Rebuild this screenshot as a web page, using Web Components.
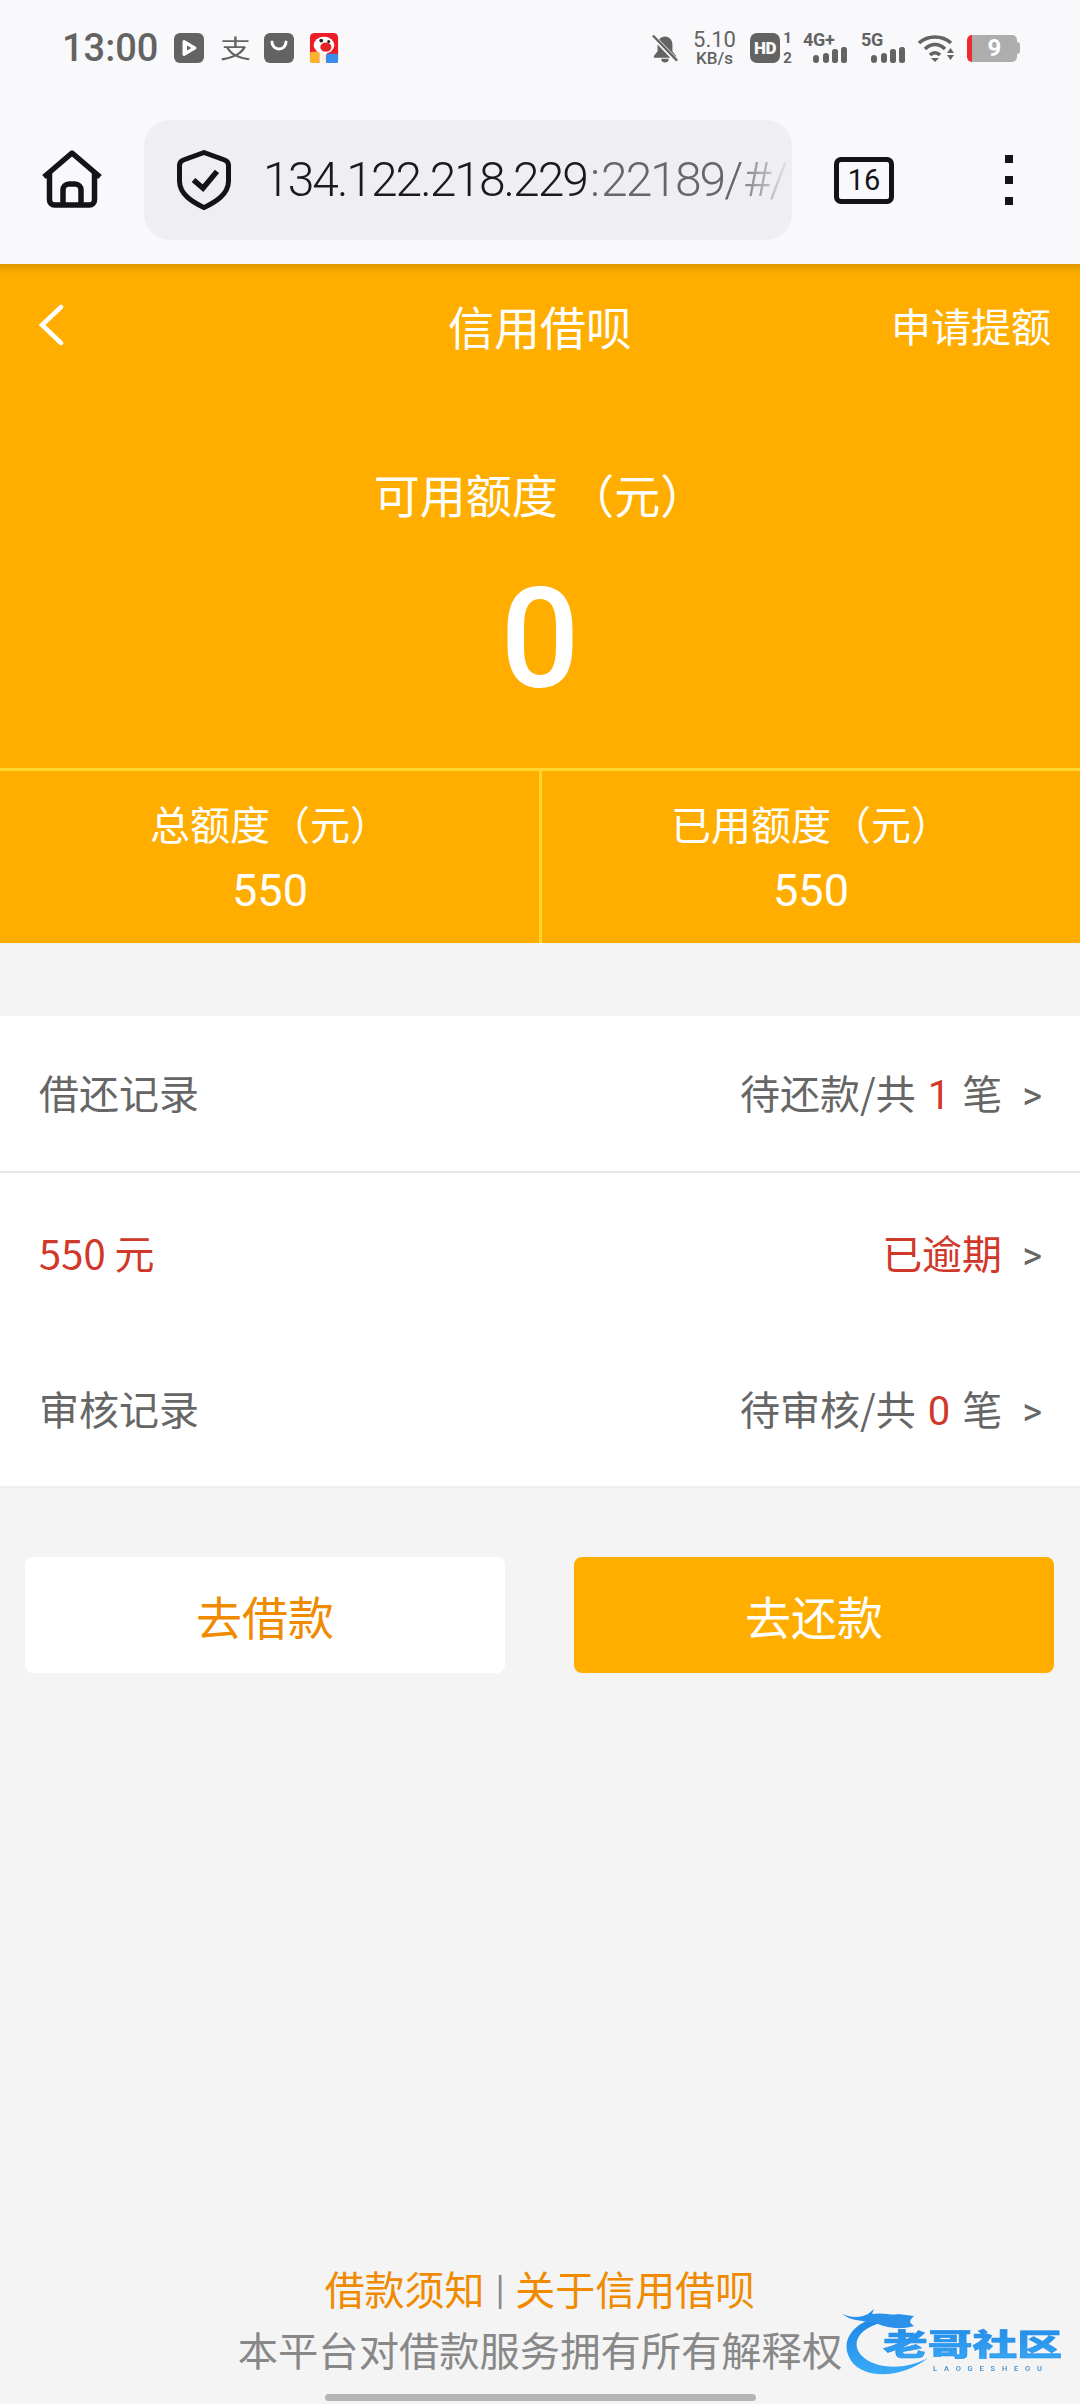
<!DOCTYPE html>
<html lang="zh">
<head>
<meta charset="utf-8">
<title>信用借呗</title>
<style>
  html, body { margin: 0; padding: 0; height: 100%; }
  body {
    display: flex;
    flex-direction: column;
    height: 2404px;
    background: #f4f4f4;
    font-family: "Noto Sans CJK SC", "Noto Sans", sans-serif;
    overflow: hidden;
  }
</style>
</head>
<body>
  <status-bar></status-bar>
  <browser-bar></browser-bar>
  <credit-header></credit-header>
  <record-list>
    <record-row label="借还记录" state="待还款/共" count="1" border></record-row>
    <record-row label="550 元" state="已逾期" alert></record-row>
    <record-row label="审核记录" state="待审核/共" count="0" last></record-row>
  </record-list>
  <action-buttons></action-buttons>
  <page-footer></page-footer>

<script>
const bars = /* html */`
  <svg width="44" height="16" viewBox="0 0 44 16">
    <rect x="10" y="8" width="6" height="8" rx="3" fill="#636363"/>
    <rect x="20" y="6" width="6" height="10" rx="3" fill="#636363"/>
    <rect x="29" y="2" width="6" height="14" rx="2.5" fill="#636363"/>
    <rect x="38" y="0" width="6" height="16" rx="2.5" fill="#636363"/>
  </svg>`

class StatusBar extends HTMLElement {
  constructor () {
    super()
    this.shadow = this.attachShadow({ mode: 'open' })
  }

  connectedCallback () {
    this.shadow.innerHTML = /* html */`
      <style>
        :host { display: flex; flex: none; height: 96px; padding: 0 60px 0 62px; align-items: center; background: #f9f9fb; color: #636363; box-sizing: border-box; font-family: Roboto, "Noto Sans", sans-serif; }
        .time { width: 112px; font-size: 38px; font-weight: 500; }
        .left { display: flex; align-items: center; }
        .right { display: flex; margin-left: auto; align-items: center; }
        svg { display: block; flex: none; }
        .zhi { width: 30px; margin-left: 16px; font: 400 31px/30px "Noto Sans CJK SC", sans-serif; text-align: center; transform: scaleY(.8); }
        .speed { width: 47px; margin-left: 13px; font-size: 17px; font-weight: 500; line-height: 18px; text-align: center; }
        .speed b { display: block; font-size: 22px; font-weight: 400; line-height: 19px; }
        .hd { display: flex; width: 30px; height: 30px; margin-left: 12px; align-items: center; justify-content: center; border-radius: 7px; background: #636363; color: #f9f9fb; font-size: 17px; font-weight: 900; letter-spacing: -.5px; }
        .sim { width: 11px; margin-left: 2px; font-size: 15px; font-weight: 700; line-height: 20px; text-align: center; }
        .sig { display: block; width: 44px; }
        .sig span { display: block; font-size: 18px; font-weight: 700; line-height: 14px; letter-spacing: -.3px; }
        .batt { display: flex; width: 50px; height: 27px; margin-left: 12px; align-items: center; justify-content: center; box-sizing: border-box; border-left: 5px solid #ee2c2c; border-radius: 5px; background: #adadad; color: #fff; font-size: 24px; font-weight: 700; line-height: 27px; }
        .cap { width: 3px; height: 12px; border-radius: 0 3px 3px 0; background: #adadad; }
      </style>
      <div class="left">
        <span class="time">13:00</span>
        <svg width="30" height="30" viewBox="0 0 30 30"><rect width="30" height="30" rx="6" fill="#636363"/><path d="M10 8.500 21 15 10 21.500Z" fill="#fff" stroke="#fff" stroke-width="3" stroke-linejoin="round"/><path d="M13 12.500 17.500 15 13 17.500Z" fill="#636363"/></svg>
        <span class="zhi">支</span>
        <svg width="30" height="30" viewBox="0 0 30 30" style="margin-left:14px"><rect width="30" height="30" rx="6" fill="#636363"/><path d="M8 9a7 7 0 0 0 14 0" fill="none" stroke="#fff" stroke-width="3" stroke-linecap="round"/></svg>
        <svg width="30" height="30" viewBox="0 0 30 32" style="margin-left:15px"><rect width="30" height="32" rx="5" fill="#ee1c25"/><rect y="20" width="10" height="12" rx="2" fill="#fbb32c"/><rect x="10" y="20" width="8" height="12" fill="#fff3e0"/><rect x="17" y="22" width="13" height="10" rx="2" fill="#3b8beb"/><ellipse cx="15" cy="13" rx="11" ry="9" fill="#fff"/><ellipse cx="17" cy="15" rx="6" ry="5" fill="#e3242b"/><circle cx="12" cy="8" r="2" fill="#222"/><circle cx="20" cy="9" r="1.600" fill="#222"/></svg>
      </div>
      <div class="right">
        <svg width="26" height="29" viewBox="0 0 28 30"><path d="M14 2c-5 0-8 4-8 9v7l-4 5v2h24v-2l-4-5v-7c0-5-3-9-8-9Z M10 26a4 4 0 0 0 8 0Z" fill="#636363"/><path d="M1 2 27 29" stroke="#f9f9fb" stroke-width="5"/><path d="M1 1 27 28" stroke="#636363" stroke-width="2.500"/></svg>
        <div class="speed"><b>5.10</b>KB/s</div>
        <span class="hd">HD</span>
        <span class="sim">1<br>2</span>
        <div class="sig" style="margin-left:10px"><span>4G+</span>${bars}</div>
        <div class="sig" style="margin-left:14px"><span>5G</span>${bars}</div>
        <svg width="37" height="28" viewBox="0 0 37 28" style="margin-left:13px"><path d="M1 9C10 1 24 1 33 9M7 15C13 9 21 9 27 15M12 21C15 18 19 18 22 21" fill="none" stroke="#636363" stroke-width="3.600"/><path d="M13 24H21L17 28Z" fill="#636363"/><path d="M29 19H36L32.500 14ZM29 21H36L32.500 26Z" fill="#636363"/></svg>
        <span class="batt">9</span>
        <span class="cap"></span>
      </div>
    `
  }
}

class BrowserBar extends HTMLElement {
  constructor () {
    super()
    this.shadow = this.attachShadow({ mode: 'open' })
  }

  connectedCallback () {
    this.shadow.innerHTML = /* html */`
      <style>
        :host { display: flex; flex: none; height: 168px; padding: 0 0 0 41px; background: #f9f9fb; box-sizing: border-box; align-items: center; }
        svg { display: block; flex: none; }
        .url { display: flex; flex: none; align-items: center; width: 648px; height: 120px; margin-left: 41px; padding-left: 33px; border-radius: 26px; background: #efeff3; box-sizing: border-box; overflow: hidden; white-space: nowrap; }
        .text { width: 529px; margin-left: 32px; overflow: hidden; color: #1a1a1e; font: 300 48px/60px Roboto, sans-serif; letter-spacing: -2px; -webkit-mask-image: linear-gradient(90deg, #000 92%, transparent 100%); mask-image: linear-gradient(90deg, #000 92%, transparent 100%); }
        .port { color: #66666c; }
        .colon { margin: 0 3px 0 3px; }
        .hash { margin-left: 2px; color: #8f8f96; }
        .tabs { display: flex; flex: none; width: 60px; height: 47px; margin-left: 42px; border: 5px solid #141418; border-radius: 7px; box-sizing: border-box; align-items: center; justify-content: center; color: #141418; font: 400 29px/1 Roboto, sans-serif; }
        .more { display: flex; flex-direction: column; gap: 13px; margin-left: 111px; }
        .more i { display: block; width: 8px; height: 8px; background: #141418; }
      </style>
      <svg width="62" height="58" viewBox="0 0 62 58" style="margin-top:-3px"><path d="M3 27 31 3 59 27" fill="none" stroke="#141418" stroke-width="5.500" stroke-linejoin="round"/><path d="M8.500 23v27a5 5 0 0 0 5 5h35a5 5 0 0 0 5-5V23" fill="none" stroke="#141418" stroke-width="5.500"/><path d="M22 55V40a6 6 0 0 1 6-6h6a6 6 0 0 1 6 6v15" fill="none" stroke="#141418" stroke-width="5.500"/></svg>
      <div class="url">
        <svg width="54" height="60" viewBox="0 0 54 62" preserveAspectRatio="none"><path d="M27 2.500 47 10q4.500 1.500 4.500 6V32C51.500 46 38 54 27 59.500 16 54 2.500 46 2.500 32V16q0-4.500 4.500-6Z" fill="none" stroke="#141418" stroke-width="5" stroke-linejoin="round"/><path d="M16.500 31 26 39.500 40 22" fill="none" stroke="#141418" stroke-width="5.500"/></svg>
        <div class="text">134.122.218.229<span class="port"><span class="colon">:</span>22189/</span><span class="hash">#/</span></div>
      </div>
      <div class="tabs">16</div>
      <div class="more"><i></i><i></i><i></i></div>
    `
  }
}

class CreditHeader extends HTMLElement {
  constructor () {
    super()
    this.shadow = this.attachShadow({ mode: 'open' })
  }

  connectedCallback () {
    this.shadow.innerHTML = /* html */`
      <style>
        :host { display: block; flex: none; height: 679px; background: linear-gradient(rgba(0,0,0,.13), rgba(0,0,0,0) 10px), #ffae00; color: #fff; }
        .nav { display: grid; grid-template-columns: 1fr auto 1fr; align-items: center; height: 121px; padding: 0 29px 5px; }
        .nav svg { display: block; margin-left: 9px; margin-top: 1px; }
        .title { font-size: 46px; }
        .apply { font-size: 40px; text-align: right; }
        .avail { margin-top: 71px; font-size: 46px; line-height: 64px; text-align: center; }
        .num { height: 150px; margin: 40px 0 53px; font: 500 139px/150px Roboto, sans-serif; text-align: center; }
        .cols { display: grid; grid-template-columns: 1fr 1fr; height: 175px; border-top: 3px solid #ffd62e; box-sizing: border-box; }
        .col { padding-top: 26px; font-size: 40px; line-height: 52px; text-align: center; }
        .col + .col { margin-left: -1px; border-left: 3px solid #ffd62e; }
        .col b { display: block; margin-top: 12px; font: 400 45px/60px Roboto, sans-serif; }
      </style>
      <div class="nav">
        <svg width="26" height="42" viewBox="0 0 26 42"><path d="M23 3 4 21 23 39" fill="none" stroke="#fff" stroke-width="4.500" stroke-linecap="round"/></svg>
        <div class="title">信用借呗</div>
        <div class="apply">申请提额</div>
      </div>
      <div class="avail">可用额度 （元）</div>
      <div class="num">0</div>
      <div class="cols">
        <div class="col">总额度（元）<b>550</b></div>
        <div class="col">已用额度（元）<b>550</b></div>
      </div>
    `
  }
}

class RecordList extends HTMLElement {
  constructor () {
    super()
    this.shadow = this.attachShadow({ mode: 'open' })
  }

  connectedCallback () {
    this.shadow.innerHTML = /* html */`
      <style>
        :host { display: block; flex: none; margin-top: 73px; background: #fff; border-bottom: 2px solid #eeeeee; }
      </style>
      <slot></slot>
    `
  }
}

class RecordRow extends HTMLElement {
  constructor () {
    super()
    this.shadow = this.attachShadow({ mode: 'open' })
  }

  connectedCallback () {
    const count = this.getAttribute('count')
    this.shadow.innerHTML = /* html */`
      <style>
        :host { display: flex; height: 155px; padding: 0 38px 0 39px; box-sizing: border-box; align-items: center; justify-content: space-between; color: #666; font-size: 40px; }
        :host([border]) { height: 157px; padding-bottom: 4px; border-bottom: 2px solid #e8e8e8; }
        :host([alert]) { height: 158px; color: #d0382a; }
        :host([last]) { padding-bottom: 2px; }
        .state { display: flex; align-items: baseline; }
        .n { margin: 0 12px; color: #d0382a; font: 400 40px Roboto, sans-serif; }
        .arrow { margin-left: 20px; color: #666; font: 400 38px Roboto, sans-serif; }
      </style>
      <span>${this.getAttribute('label')}</span>
      <span class="state">${this.getAttribute('state')}${count !== null ? `<span class="n">${count}</span>笔` : ''}<span class="arrow">&gt;</span></span>
    `
  }
}

class ActionButtons extends HTMLElement {
  constructor () {
    super()
    this.shadow = this.attachShadow({ mode: 'open' })
  }

  connectedCallback () {
    this.shadow.innerHTML = /* html */`
      <style>
        :host { display: flex; flex: none; justify-content: space-between; margin-top: 69px; padding: 0 26px 0 25px; }
        div { display: flex; width: 480px; height: 116px; border-radius: 8px; align-items: center; justify-content: center; box-sizing: border-box; font-size: 46px; }
        .ghost { background: #fff; color: #f08a00; }
        .solid { background: #ffae00; color: #fff; }
      </style>
      <div class="ghost">去借款</div>
      <div class="solid">去还款</div>
    `
  }
}

class PageFooter extends HTMLElement {
  constructor () {
    super()
    this.shadow = this.attachShadow({ mode: 'open' })
  }

  connectedCallback () {
    this.shadow.innerHTML = /* html */`
      <style>
        :host { display: flex; position: relative; flex: 1; flex-direction: column; align-items: center; justify-content: flex-end; padding-bottom: 3px; color: #888; text-align: center; }
        .links { display: flex; gap: 6px; color: #f08a00; font-size: 40px; line-height: 60px; }
        .links span { color: #888; font-family: "Noto Sans", sans-serif; font-size: 34px; }
        .note { font-size: 40.3px; line-height: 62px; }
        .home { width: 431px; height: 7px; margin-top: 14px; border-radius: 4px; background: #b5b5b5; }
        .logo { position: absolute; left: 838px; bottom: 24px; width: 232px; height: 72px; filter: blur(.5px); }
      </style>
      <div class="links">借款须知<span>|</span>关于信用借呗</div>
      <div class="note">本平台对借款服务拥有所有解释权</div>
      <div class="home"></div>
      <svg class="logo" viewBox="0 0 232 72">
        <defs><linearGradient id="g" x1="0" y1="0" x2="0" y2="1"><stop offset="0" stop-color="#1f86e6"/><stop offset="1" stop-color="#38aaf6"/></linearGradient></defs>
        <path d="M36 10C10 18 2 38 14 54 26 70 62 72 90 50 68 62 38 62 24 48 12 36 20 20 46 14Z" fill="url(#g)"/>
        <path d="M4 6C14 10 22 10 30 6L36 1 34 6C46 4 54 8 60 6L76 8C72 12 70 14 76 18 62 22 50 20 40 16 28 12 14 14 4 6Z" fill="#2a90ea"/>
        <text x="45" y="47" font-family="'Noto Sans CJK SC'" font-weight="900" font-size="30" fill="url(#g)" stroke="#2a90ea" stroke-width=".6" textLength="179" lengthAdjust="spacingAndGlyphs">老哥社区</text>
        <text x="95" y="63" font-family="Roboto" font-size="7.5" font-weight="500" fill="#3f8fd0" textLength="109" lengthAdjust="spacing">LAOGESHEOU</text>
      </svg>
    `
  }
}

customElements.define('status-bar', StatusBar)
customElements.define('browser-bar', BrowserBar)
customElements.define('credit-header', CreditHeader)
customElements.define('record-list', RecordList)
customElements.define('record-row', RecordRow)
customElements.define('action-buttons', ActionButtons)
customElements.define('page-footer', PageFooter)
</script>
</body>
</html>
